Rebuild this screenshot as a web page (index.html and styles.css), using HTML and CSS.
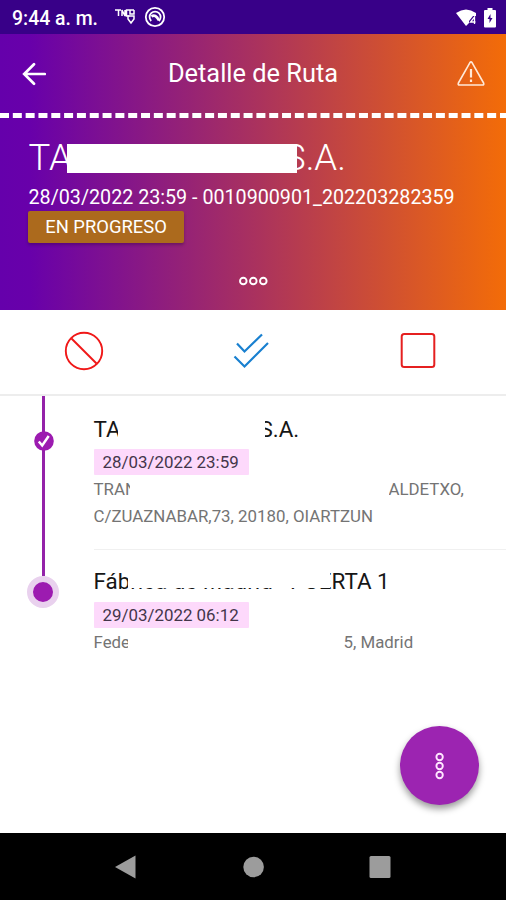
FILE: index.html
```html
<!DOCTYPE html>
<html lang="es">
<head>
<meta charset="utf-8">
<title>Detalle de Ruta</title>
<link rel="stylesheet" href="styles.css">
</head>
<body>
<div class="phone">
  <div class="status">
    <span class="clock">9:44 a. m.</span>
    <svg class="st-net" width="20" height="18" viewBox="0 0 20 18" fill="none" stroke="#fff" stroke-width="1.5"><path d="M0 2h6M3.500 2v6M7 8V2l3 6V2M14.500 2h-3v6h3M19 2h-4v4h4v-4"/><path d="M13 8h6v3l-3 4-3-4z" stroke-width="1.5"/></svg>
    <svg class="st-circle" width="22" height="22" viewBox="0 0 22 22" fill="none" stroke="#fff" stroke-width="1.8"><circle cx="11" cy="11" r="9.2"/><path d="M7.200 15A5.500 5.500 0 1 1 15 15"/><path d="M7.500 10.500q4-3 7.500 4" stroke-width="2.600"/></svg>
    <svg class="st-wifi" width="21" height="18" viewBox="0 0 21 18"><path d="M0 4Q10 -3 20 4v3h-3l-4 5v2l-3 3z" fill="#fff"/><path d="M18.500 15V8l-4 5h5" fill="none" stroke="#fff" stroke-width="1.300"/></svg>
    <svg class="st-bat" width="12" height="20" viewBox="0 0 12 20"><path d="M3.500 0h5v2H11q1 0 1 1v15.500q0 1-1 1H1q-1 0-1-1V3q0-1 1-1h2.500z" fill="#fff"/><path d="M6.500 6L3.500 11H5.500V15L8.500 10H6.500z" fill="#380088"/></svg>
  </div>
  <header class="hero">
    <div class="bar">
      <svg class="back" width="24" height="24" viewBox="0 0 24 24" fill="none" stroke="#fff" stroke-width="2.700" stroke-linecap="round"><path d="M22.800 12H2.500M12 2.200L2.200 12l9.800 9.800"/></svg>
      <h1>Detalle de Ruta</h1>
      <svg class="warn" width="28" height="25" viewBox="0 0 28 25" fill="none" stroke="#ffe9d8" stroke-width="1.600" stroke-linejoin="round"><path d="M12.800 1.800Q14 0 15.200 1.800L26.600 22Q27.400 24 25.400 24H2.600Q.600 24 1.400 22z"/><path d="M14 8v8.500" stroke-width="2.200"/><path d="M14 18.500v2.500" stroke-width="2.200"/></svg>
    </div>
    <svg class="dashes" width="506" height="5"><path d="M0 2.500H506" stroke="#fff" stroke-width="5" stroke-dasharray="9 3.820"/></svg>
    <div class="company"><span class="co-left">TA</span><span class="co-mask"></span><span class="co-right">S.A.</span></div>
    <div class="route">28/03/2022 23:59 - 0010900901_202203282359</div>
    <div class="badge">EN PROGRESO</div>
    <svg class="more" width="30" height="10" viewBox="0 0 30 10" fill="none" stroke="#fff" stroke-width="1.900"><circle cx="5.300" cy="5" r="3.300"/><circle cx="15.300" cy="5" r="3.300"/><circle cx="25.300" cy="5" r="3.300"/></svg>
  </header>
  <nav class="actions">
    <svg width="40" height="40" viewBox="0 0 40 40" fill="none" stroke="#f01818" stroke-width="1.900"><circle cx="20" cy="20" r="18.200"/><path d="M7.500 7.500L32.500 32.500"/></svg>
    <svg width="40" height="40" viewBox="0 0 40 40" fill="none" stroke="#1980d0" stroke-width="2.200"><path d="M6 12.500L13.500 20.500 31 3.500M3.500 25.500L13.500 35.500 37 12"/></svg>
    <svg width="40" height="40" viewBox="0 0 40 40" fill="none" stroke="#e52020" stroke-width="2"><rect x="3.700" y="3" width="32.600" height="33" rx="2.500"/></svg>
  </nav>
  <main class="stops">
    <section class="stop first">
      <div class="rail"><span class="line"></span>
        <svg class="done" width="20" height="20" viewBox="0 0 20 20"><circle cx="10" cy="10" r="9.800" fill="#9c1bb0"/><path d="M4.800 10.500l3.400 4 6.500-9.500" fill="none" stroke="#fff" stroke-width="2.500"/></svg>
      </div>
      <div class="info">
        <div class="name split"><span class="n-left">TA</span><span class="n-mask"></span><span class="n-right">S.A.</span></div>
        <div class="date">28/03/2022 23:59</div>
        <div class="addr split"><span class="a-left">TRAN</span><span class="a-mask"></span><span class="a-right">ALDETXO,</span></div>
        <div class="addr">C/ZUAZNABAR,73, 20180, OIARTZUN</div>
      </div>
    </section>
    <section class="stop second">
      <div class="rail"><span class="line short"></span><span class="current"></span></div>
      <div class="info">
        <div class="name"><span class="gate">Fábrica de Madrid - PUERTA 1</span><span class="cover"></span></div>
        <div class="date">29/03/2022 06:12</div>
        <div class="addr split"><span class="f-left">Fede</span><span class="f-mask"></span><span class="f-right">5, Madrid</span></div>
      </div>
    </section>
    <button class="fab" aria-label="Más"><svg width="10" height="30" viewBox="0 0 10 30" fill="none" stroke="#ffe6ff" stroke-width="1.900"><circle cx="4.600" cy="6" r="3.200"/><circle cx="4.600" cy="15" r="3.200"/><circle cx="4.600" cy="24" r="3.200"/></svg></button>
  </main>
  <footer class="keys">
    <svg width="24" height="26" viewBox="0 0 24 26"><path d="M1 13L21.500 1.500v23z" fill="#9c9c9c"/></svg>
    <svg width="24" height="26" viewBox="0 0 24 26"><circle cx="12.600" cy="13" r="10.300" fill="#9c9c9c"/></svg>
    <svg width="24" height="26" viewBox="0 0 24 26"><rect x="1.500" y="2" width="21" height="22" rx="1.500" fill="#9c9c9c"/></svg>
  </footer>
</div>
</body>
</html>
```
FILE: styles.css
```css
* { box-sizing: border-box; }
body { margin: 0; font-family: Roboto, "Liberation Sans", sans-serif; background: #fff; }
svg { display: block; flex: none; }
.phone { width: 506px; height: 900px; display: flex; flex-direction: column; overflow: hidden; }
.status { height: 34px; background: #380088; color: #fff; display: flex; align-items: center; padding: 0 10px 0 12px; }
.clock { width: 103px; font-size: 19.400px; font-weight: 500; line-height: 36px; white-space: nowrap; padding-top: 3px; }
.st-circle { margin-left: 9px; }
.st-wifi { margin: 1px 7px 0 auto; }
.st-bat { margin-top: 1px; }
.hero { height: 276px; background: linear-gradient(90deg, #6500ab 0, #6800aa 6%, #a9315f 50%, #f36c08 100%); color: #fff; }
.bar { height: 79px; display: flex; align-items: center; justify-content: space-between; padding: 0 21px 0 22px; }
h1 { margin: 0 0 2px 3px; font-size: 25.400px; font-weight: 400; white-space: nowrap; line-height: 32px; }
.company { display: flex; height: 44px; margin: 18px 0 0 28.500px; font-size: 36.500px; font-weight: 300; line-height: 44px; white-space: nowrap; }
.co-left { width: 38.500px; }
.co-mask { position: relative; z-index: 1; flex: none; width: 230px; height: 29px; margin-top: 8px; background: #fff; }
.co-right { margin-left: -13px; }
.route { margin-left: 28.500px; font-size: 19.700px; line-height: 24px; height: 30px; padding-top: 6px; white-space: nowrap; }
.badge { margin: 1px 0 0 28px; width: 156px; height: 32px; border-radius: 2px; background: #ac6a1d; text-align: center; font-size: 18.400px; line-height: 31px; white-space: nowrap; box-shadow: 0 2px 3px rgba(40,0,60,.35); }
.more { margin: 33px auto 0 238px; }
.actions { height: 86px; border-bottom: 2px solid #ededed; display: flex; justify-content: space-between; padding: 21px 68px 0 64px; }
.stops { height: 437px; position: relative; }
.stop { display: flex; }
.first { height: 153px; }
.second { height: 130px; }
.rail { width: 93.500px; flex: none; position: relative; }
.line { display: block; width: 3px; height: 153px; margin-left: 42px; background: #9422a9; }
.line.short { height: 27px; }
.done { position: absolute; left: 34px; top: 35px; }
.current { display: block; width: 32px; height: 32px; margin-left: 27px; border: 6px solid #e9d1ee; border-radius: 50%; background: #9c1bb0; }
.info { flex: 1; padding-top: 19px; }
.second .info { border-top: 1px solid #f0f0f0; padding-top: 17px; }
.name { position: relative; height: 28px; font-size: 22.400px; line-height: 28px; color: #161616; white-space: nowrap; }
.split { display: flex; }
.n-left { width: 24px; }
.n-mask { position: relative; z-index: 1; flex: none; width: 147px; height: 28px; background: #fff; }
.n-right { margin-left: -5px; }
.cover { position: absolute; left: 34px; top: 2px; width: 202px; height: 19px; background: #fff; }
.date { width: 155px; height: 26px; margin-top: 6px; padding-left: 9px; background: #fdd9fb; font-size: 16.900px; line-height: 27px; color: #43354a; white-space: nowrap; border-radius: 1px; }
.second .date { margin-top: 7px; }
.addr { height: 27px; font-size: 16.850px; line-height: 28px; color: #747474; white-space: nowrap; }
.a-left { width: 36px; }
.a-mask { position: relative; z-index: 1; flex: none; width: 259px; background: #fff; }
.f-left { width: 34px; }
.f-mask { position: relative; z-index: 1; flex: none; width: 216px; background: #fff; }
.fab { position: absolute; right: 27px; bottom: 28px; width: 79px; height: 79px; padding: 0; border: 0; border-radius: 50%; background: #9c24b1; display: flex; align-items: center; justify-content: center; box-shadow: 0 4px 7px rgba(0,0,0,.4); }
.keys { height: 67px; background: #000; display: flex; justify-content: space-between; padding: 21px 114px 0; }
```
